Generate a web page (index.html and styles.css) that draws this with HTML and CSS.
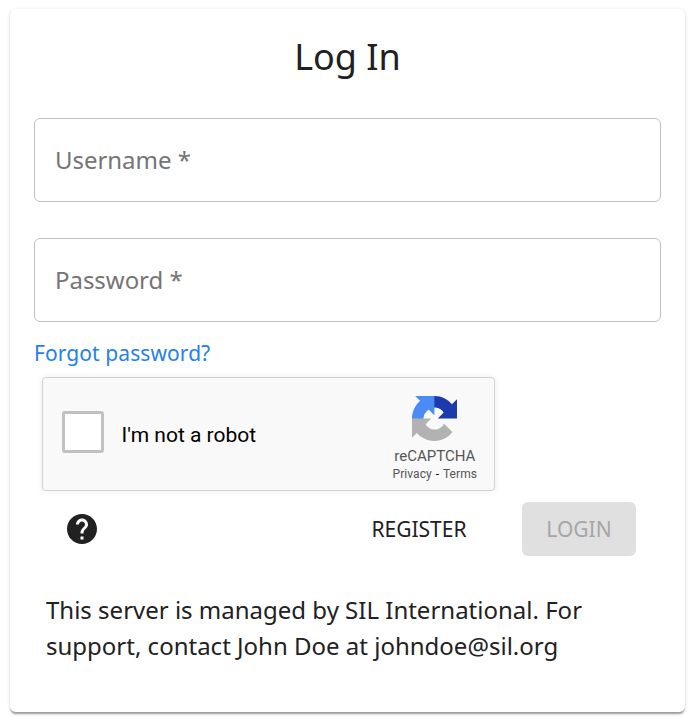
FILE: index.html
```html
<!DOCTYPE html>
<html lang="en">
<head>
<meta charset="utf-8">
<title>Log In</title>
<link rel="stylesheet" href="styles.css">
</head>
<body>
<form class="card">
  <h1 class="title">Log In</h1>
  <label class="field">Username *</label>
  <label class="field">Password *</label>
  <a class="forgot">Forgot password?</a>
  <div class="captcha">
    <span class="checkbox"></span>
    <span class="robot">I'm not a robot</span>
    <div class="brand">
      <svg class="logo" viewBox="0 0 64 64">
        <path d="M64 31.955l-.033-1.37V4.687l-7.16 7.16C50.948 4.674 42.033.093 32.05.093c-10.4 0-19.622 4.96-25.458 12.64l11.736 11.86a15.55 15.55 0 0 1 4.754-5.334c2.05-1.6 4.952-2.906 8.968-2.906.485 0 .86.057 1.135.163 4.976.393 9.288 3.14 11.828 7.124l-8.307 8.307L64 31.953" fill="#1c3aa9"/>
        <path d="M31.862.094l-1.37.033H4.594l7.16 7.16C4.58 13.147 0 22.06 0 32.046c0 10.4 4.96 19.622 12.64 25.458L24.5 45.768a15.55 15.55 0 0 1-5.334-4.754c-1.6-2.05-2.906-4.952-2.906-8.968 0-.485.057-.86.163-1.135.393-4.976 3.14-9.288 7.124-11.828l8.307 8.307L31.86.095" fill="#4a8cf5"/>
        <path d="M.001 32.045l.033 1.37v25.898l7.16-7.16c5.86 7.173 14.774 11.754 24.76 11.754 10.4 0 19.622-4.96 25.458-12.64l-11.736-11.86a15.55 15.55 0 0 1-4.754 5.334c-2.05 1.6-4.952 2.906-8.968 2.906-.485 0-.86-.057-1.135-.163-4.976-.393-9.288-3.14-11.828-7.124l8.307-8.307c-10.522.04-22.4.066-27.295-.005" fill="#b2b2b2"/>
      </svg>
      <span class="name">reCAPTCHA</span>
      <span class="legal">Privacy <span class="dash">-</span> Terms</span>
    </div>
  </div>
  <div class="actions">
    <svg class="help" viewBox="0 0 24 24"><path d="M12 2C6.48 2 2 6.48 2 12s4.48 10 10 10 10-4.48 10-10S17.52 2 12 2zm1 17h-2v-2h2v2zm2.07-7.75l-.9.92C13.45 12.9 13 13.5 13 15h-2v-.5c0-1.1.45-2.1 1.17-2.83l1.24-1.26c.37-.36.59-.86.59-1.41 0-1.1-.9-2-2-2s-2 .9-2 2H8c0-2.21 1.79-4 4-4s4 1.79 4 4c0 .88-.36 1.68-.93 2.25z"/></svg>
    <button type="button" class="button register">Register</button>
    <button type="button" class="button login" disabled>Login</button>
  </div>
  <p class="notice">This server is managed by SIL International. For support, contact John Doe at johndoe@sil.org</p>
</form>
</body>
</html>
```
FILE: styles.css
```css
* { box-sizing: border-box; }
body {
  margin: 0;
  padding: 9px 8px 9px 10px;
  background: #fff;
  color: #212121;
  font-family: "Noto Sans", sans-serif;
}
.card {
  height: 703px;
  padding: 24px 24px 0;
  border-radius: 6px;
  background: #fff;
  box-shadow: 0 3px 1.5px -1.5px rgba(0,0,0,.2), 0 1.5px 1.5px rgba(0,0,0,.14), 0 1.5px 4.5px rgba(0,0,0,.12);
}
.title {
  margin: 0 0 37px;
  font-size: 36px;
  line-height: 48px;
  font-weight: 400;
  text-align: center;
}
.field {
  display: flex;
  align-items: center;
  height: 84px;
  margin-bottom: 36px;
  padding: 0 20px 2px;
  border: 1px solid #c0c0c0;
  border-radius: 6px;
  color: #757575;
  font-size: 24px;
  letter-spacing: -.04px;
}
.forgot {
  display: block;
  margin-top: -20px;
  font-size: 21px;
  line-height: 30px;
  letter-spacing: .08px;
  color: #2680eb;
}
.captcha {
  display: flex;
  align-items: center;
  width: 453px;
  height: 114px;
  margin: 9px 0 0 8px;
  padding: 0 17px 0 19px;
  border: 1px solid #d3d3d3;
  border-radius: 4px;
  background: #f9f9f9;
  box-shadow: 0 0 6px rgba(0,0,0,.08);
  font-family: Roboto, sans-serif;
}
.checkbox {
  width: 42px;
  height: 42px;
  margin-top: -5px;
  border: 3px solid #c1c1c1;
  border-radius: 3px;
  background: #fff;
}
.robot { margin: 2px 0 0 17.5px; color: #000; font-size: 21px; }
.brand {
  display: flex;
  flex-direction: column;
  align-items: center;
  margin-left: auto;
  margin-top: 11px;
  color: #555;
}
.logo { width: 45px; height: 45px; }
.name { margin-top: 6px; font-size: 15px; line-height: 18px; }
.legal { font-size: 12px; line-height: 18px; letter-spacing: .06px; }
.dash { margin: 0 1px; color: #000; }
.actions {
  display: flex;
  align-items: center;
  height: 54px;
  margin: 11px 25px 0 30px;
}
.help { width: 36px; height: 36px; fill: #212121; }
.button {
  height: 54px;
  padding: 0 24px;
  border: 0;
  border-radius: 6px;
  background: transparent;
  color: #212121;
  font: 400 21px "Noto Sans", sans-serif;
  text-transform: uppercase;
}
.register { margin-left: auto; margin-right: 31.5px; }
.login { width: 114px; background: #e0e0e0; color: #a6a6a6; }
.notice {
  margin: 36px 12px 0;
  font-size: 24px;
  line-height: 36px;
  letter-spacing: 0;
}
```
